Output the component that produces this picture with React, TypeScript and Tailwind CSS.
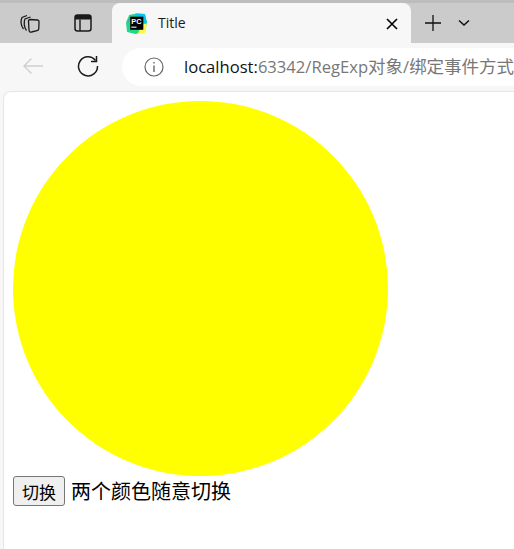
import { useState } from "react";

const uiFont = { fontFamily: '"Open Sans", "Noto Sans CJK SC", sans-serif' };

function PcLogo() {
  return (
    <svg width="21" height="21" viewBox="0 0 20 20" className="shrink-0">
      <path d="M3 2 L10 0.5 L18 1 L20 9 L18 18 L9 20 L1 18 L0 9 Z" fill="#21d789" />
      <path d="M9 0.5 L18 1 L20 10 L14 8 Z" fill="#07c3f2" />
      <path d="M11 20 L18 19 L20 10 L15 11 Z" fill="#fcf84a" />
      <path d="M1 8 L4 3 L6 8 Z" fill="#b74af7" opacity="0.4" />
      <rect x="4" y="3.5" width="12.5" height="12.5" fill="#000" />
      <text x="5" y="10" fontSize="7" fontWeight="700" fill="#fff" fontFamily="Liberation Sans, sans-serif">PC</text>
      <rect x="5" y="13" width="5" height="1" fill="#fff" />
    </svg>
  );
}

function TabStrip() {
  return (
    <div className="flex h-[43px] items-end border-t-[3px] border-[#bdbdbd] bg-[#cbcbcb]">
      <div className="flex h-[40px] w-[112px] items-center">
        <div className="flex w-[60px] justify-center">
          <svg width="22" height="21" viewBox="0 0 22 20" fill="none" stroke="#1a1a1a" strokeWidth="1.3">
            <path d="M4.5 15.5 C1.5 12 1.5 7 3 4 L8 2" />
            <path d="M7.5 17 C5 14 4.5 8 6 5.5 L11.5 3.5" />
            <path d="M11 6 L18.5 6.5 C19.5 6.6 20 7 20 8 L19.8 15 C19.8 16 19 17 18 17.2 L12.5 18.5 C11 18.8 10 18 10 16.5 L9.5 7.5 C9.5 6.5 10 6 11 6 Z" />
          </svg>
        </div>
        <div className="flex w-[46px] justify-center">
          <svg width="18" height="18" viewBox="0 0 18 18" fill="none">
            <rect x="1" y="1" width="16" height="16" rx="2.5" stroke="#1a1a1a" strokeWidth="1.5" />
            <path d="M1 3.5 Q1 1 3.5 1 H14.5 Q17 1 17 3.5 V5.5 H1 Z" fill="#1a1a1a" />
            <path d="M6 5.5 V17" stroke="#1a1a1a" strokeWidth="1.4" />
          </svg>
        </div>
      </div>
      <div className="flex h-[40px] w-[299px] items-center rounded-t-[8px] bg-[#f7f7f7] pl-[14px] pr-[13px]">
        <PcLogo />
        <span className="mb-[2px] ml-[11px] flex-1 text-[14px] text-[#1a1a1a]" style={uiFont}>Title</span>
        <svg width="12" height="12" viewBox="0 0 12 12" stroke="#000" strokeWidth="1.6" className="mb-[-1px]">
          <path d="M1 1 L11 11 M11 1 L1 11" />
        </svg>
      </div>
      <div className="flex h-[40px] flex-1 items-center">
        <svg width="18" height="18" viewBox="0 0 18 18" stroke="#111" strokeWidth="1.3" className="ml-[13px]">
          <path d="M9 1 V17 M1 9 H17" />
        </svg>
        <svg width="12" height="8" viewBox="0 0 12 8" fill="none" stroke="#111" strokeWidth="1.5" className="ml-[16px]">
          <path d="M1 1.5 L6 6 L11 1.5" />
        </svg>
      </div>
    </div>
  );
}

function Toolbar() {
  return (
    <div className="flex h-[48px] items-center bg-[#f7f7f7] pb-[1px]">
      <svg width="22" height="18" viewBox="0 0 22 18" fill="none" stroke="#cfcfcf" strokeWidth="1.4" className="mb-[1px] ml-[22px] shrink-0">
        <path d="M21 9 H2 M9.5 1.5 L2 9 L9.5 16.5" />
      </svg>
      <svg width="22" height="22" viewBox="0 0 22 22" fill="none" stroke="#1a1a1a" strokeWidth="1.5" className="mb-[1px] ml-[33px] shrink-0">
        <path d="M18.5 5.5 A9.5 9.5 0 1 0 20.5 11" />
        <path d="M19.5 1 V6.5 H14" />
      </svg>
      <div className="ml-[23px] flex h-[38px] flex-1 items-center overflow-hidden rounded-l-[19px] bg-white pl-[22px]">
        <svg width="20" height="20" viewBox="0 0 20 20" fill="none" stroke="#666" strokeWidth="1.2" className="shrink-0">
          <circle cx="10" cy="10" r="9" />
          <path d="M10 8.5 V15 M10 5 V6.5" strokeWidth="1.4" />
        </svg>
        <span className="mb-[1px] ml-[20px] whitespace-nowrap text-[16.6px] text-[#777777]" style={uiFont}>
          <span className="text-[#111]">localhost:</span>63342/RegExp<span className="text-[17.5px]">对象</span>/<span className="text-[17.5px]">绑定事件方式</span>
        </span>
      </div>
    </div>
  );
}

export default function App() {
  const [on, setOn] = useState(true);

  return (
    <div className="flex h-[549px] w-[514px] flex-col overflow-hidden bg-[#f7f7f7]">
      <TabStrip />
      <Toolbar />
      <div className="ml-[3px] flex-1 rounded-tl-[8px] border-l border-t border-[#e6e6e6] bg-white pl-[9px] pt-[9px]">
        <div className={`h-[375px] w-[375px] rounded-full ${on ? "bg-[#ffff00]" : "bg-[#ff0000]"}`} />
        <div className="flex items-center text-[20px] text-black" style={{ fontFamily: '"Noto Sans CJK SC", sans-serif' }}>
          <button
            onClick={() => setOn(!on)}
            className="h-[30px] w-[52px] rounded-[3px] border border-[#767676] bg-[#efefef] text-[17px] leading-none"
          >
            切换
          </button>
          <span className="ml-[6px] leading-[28px]">两个颜色随意切换</span>
        </div>
      </div>
    </div>
  );
}
